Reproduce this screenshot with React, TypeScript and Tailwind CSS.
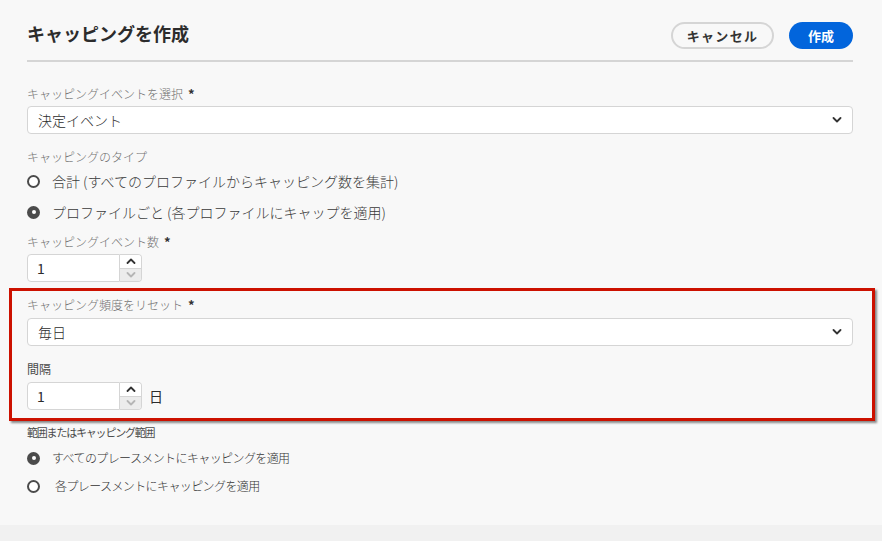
import React from 'react'

const FONT = { fontFamily: '"Noto Sans CJK JP", "Noto Sans", sans-serif' }

function Label({ text, required }: { text: string; required?: boolean }) {
  return (
    <div className="flex items-center h-4 text-[12px] leading-4 text-[#707070] font-light">
      {text}
      {required && <span className="ml-[5px] text-[#333] text-[13px] font-bold">*</span>}
    </div>
  )
}

function Chevron({ up, className }: { up?: boolean; className?: string }) {
  return (
    <svg width="10" height="6" viewBox="0 0 10 6" className={className}>
      <path
        d={up ? 'M1.5 5 L5 1.5 L8.5 5' : 'M1.5 1 L5 4.5 L8.5 1'}
        fill="none"
        stroke="currentColor"
        strokeWidth="1.8"
        strokeLinecap="round"
        strokeLinejoin="round"
      />
    </svg>
  )
}

function Select({ value }: { value: string }) {
  return (
    <div className="h-[28px] bg-white border border-[#d5d5d5] rounded-[4px] flex items-center justify-between pl-[10px] pr-[10px]">
      <span className="text-[14px] text-[#2c2c2c] font-light">{value}</span>
      <Chevron className="text-[#333]" />
    </div>
  )
}

function NumberInput() {
  return (
    <div className="flex h-[28px] w-[115px]">
      <div className="flex-1 bg-white border border-[#d5d5d5] rounded-l-[4px] flex items-center pl-[9px] text-[14px] text-[#2c2c2c]">
        1
      </div>
      <div className="w-[22px] flex flex-col border border-l-0 border-[#d5d5d5] rounded-r-[4px] overflow-hidden">
        <div className="flex-1 bg-white flex items-center justify-center text-[#333]">
          <Chevron up />
        </div>
        <div className="flex-1 bg-[#ececec] border-t border-[#d5d5d5] flex items-center justify-center text-[#b5b5b5]">
          <Chevron />
        </div>
      </div>
    </div>
  )
}

function Radio({
  checked,
  text,
  gap = 'ml-[12px]',
  small,
}: {
  checked?: boolean
  text: string
  gap?: string
  small?: boolean
}) {
  return (
    <div className="flex items-center h-6">
      {checked ? (
        <span className="w-[13px] h-[13px] rounded-full bg-[#4b4b4b] flex items-center justify-center">
          <span className="w-[4px] h-[4px] rounded-full bg-white" />
        </span>
      ) : (
        <span className="w-[13px] h-[13px] rounded-full border-2 border-[#4b4b4b] bg-white" />
      )}
      <span
        className={`${gap} ${
          small ? 'text-[12px] tracking-[-0.6px] text-[#333]' : 'text-[14px] text-[#3a3a3a]'
        } font-light`}
      >
        {text}
      </span>
    </div>
  )
}

export default function App() {
  return (
    <div style={FONT} className="min-h-[541px] bg-[#f1f1f1]">
      <div className="h-[525px] bg-[#f8f8f8] pl-[27px] pr-[29px]">
        {/* ヘッダー */}
        <div className="pt-[22px] flex items-center justify-between h-[49px]">
          <h1 className="text-[18px] font-bold text-[#2c2c2c] mb-[5px]">キャッピングを作成</h1>
          <div className="flex items-center gap-[15px]">
            <button className="h-[27px] w-[103px] rounded-full border-2 border-[#d5d5d5] bg-[#f8f8f8] text-[13px] font-bold text-[#333] tracking-[0.1em]">
              キャンセル
            </button>
            <button className="h-[27px] w-[64px] rounded-full bg-[#0265dc] text-[13px] font-bold text-white">
              作成
            </button>
          </div>
        </div>
        <div className="mt-[11px] h-[2px] bg-[#d5d5d5]" />

        <div className="mt-[24px]">
          <Label text="キャッピングイベントを選択" required />
        </div>
        <div className="mt-[4px]">
          <Select value="決定イベント" />
        </div>

        <div className="mt-[15px]">
          <Label text="キャッピングのタイプ" />
        </div>
        <div className="mt-[4px]">
          <Radio text="合計 (すべてのプロファイルからキャッピング数を集計)" />
        </div>
        <div className="mt-[7px]">
          <Radio checked text="プロファイルごと (各プロファイルにキャップを適用)" />
        </div>

        <div className="mt-[10px]">
          <Label text="キャッピングイベント数" required />
        </div>
        <div className="mt-[4px]">
          <NumberInput />
        </div>

        {/* 強調枠 */}
        <div className="mt-[6px] ml-[-18px] mr-[-22px] border-[3px] border-[#cc1100] pl-[15px] pr-[19px] pt-[6px] pb-[8px] shadow-[2px_2px_2px_rgba(0,0,0,0.45)]">
          <Label text="キャッピング頻度をリセット" required />
          <div className="mt-[5px]">
            <Select value="毎日" />
          </div>
          <div className="mt-[15px] h-4 flex items-center text-[12px] text-[#4b4b4b]">間隔</div>
          <div className="mt-[5px] flex items-center">
            <NumberInput />
            <span className="ml-[7px] text-[14px] text-[#2c2c2c]">日</span>
          </div>
        </div>

        <div className="mt-[4px] h-[14px] flex items-center text-[11px] tracking-[-1.2px] text-[#4b4b4b]">
          範囲またはキャッピング範囲
        </div>
        <div className="mt-[7px]">
          <Radio checked small text="すべてのプレースメントにキャッピングを適用" gap="ml-[12px]" />
        </div>
        <div className="mt-[4px]">
          <Radio small text="各プレースメントにキャッピングを適用" gap="ml-[15px]" />
        </div>
      </div>
    </div>
  )
}
